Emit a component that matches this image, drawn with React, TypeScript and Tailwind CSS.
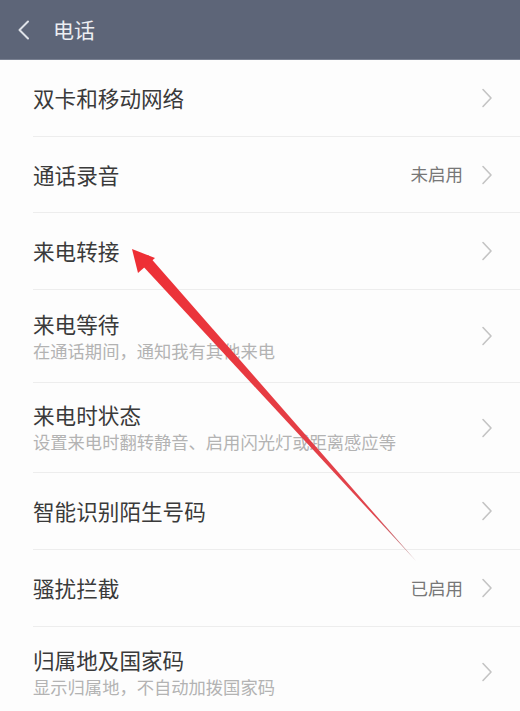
import React from "react";

type Row = { title: string; sub?: string; value?: string; h: string };

const rows: Row[] = [
  { title: "双卡和移动网络", h: "h-[77px]" },
  { title: "通话录音", value: "未启用", h: "h-[76px]" },
  { title: "来电转接", h: "h-[77px]" },
  { title: "来电等待", sub: "在通话期间，通知我有其他来电", h: "h-[93px]" },
  { title: "来电时状态", sub: "设置来电时翻转静音、启用闪光灯或距离感应等", h: "h-[90px]" },
  { title: "智能识别陌生号码", h: "h-[77px]" },
  { title: "骚扰拦截", value: "已启用", h: "h-[77px]" },
  { title: "归属地及国家码", sub: "显示归属地，不自动加拨国家码", h: "h-[90px]" },
];

function Chevron() {
  return (
    <svg width="12" height="20" viewBox="0 0 12 20" className="shrink-0">
      <path d="M2 1.5 L10 10 L2 18.5" fill="none" stroke="#c4c4c4" strokeWidth="1.6" strokeLinecap="round" strokeLinejoin="round" />
    </svg>
  );
}

export default function App() {
  return (
    <div
      className="relative w-[520px] h-[711px] overflow-hidden bg-[#fdfdfd]"
      style={{ fontFamily: '"Noto Sans CJK SC", "Noto Sans", sans-serif' }}
    >
      <div className="h-[60px] bg-[#5d6578] flex items-center border-b border-[#7a8192]">
        <div className="w-[53px] flex items-center justify-start pl-[17px]">
          <svg width="14" height="20" viewBox="0 0 14 20">
            <path d="M11 1.5 L2.5 10 L11 18.5" fill="none" stroke="#dfe2e8" strokeWidth="2" strokeLinecap="round" strokeLinejoin="round" />
          </svg>
        </div>
        <span className="text-[21px] text-[#eceef2] leading-none">电话</span>
      </div>
      <div className="flex flex-col">
        {rows.map((r, i) => (
          <div key={i} className={`${r.h} pl-[33px] flex flex-col shrink-0`}>
            <div className={`flex-1 flex items-center pr-[27px] ${i < rows.length - 1 ? "border-b border-[#ededed]" : ""}`}>
              <div className="flex-1 flex flex-col">
                <span className="text-[21.6px] leading-[28px] text-[#3a3a3a]">{r.title}</span>
                {r.sub && (
                  <span className="text-[17.3px] leading-[24px] mt-[1px] text-[#b3b3b3]">{r.sub}</span>
                )}
              </div>
              {r.value && (
                <span className="text-[17.5px] text-[#777777] mr-[18px]">{r.value}</span>
              )}
              <Chevron />
            </div>
          </div>
        ))}
      </div>
      <svg className="absolute left-0 top-0 pointer-events-none" width="520" height="711" viewBox="0 0 520 711">
        <defs>
          <linearGradient id="ar" x1="132" y1="249" x2="416" y2="561" gradientUnits="userSpaceOnUse">
            <stop offset="0" stopColor="#ee2f35" />
            <stop offset="0.85" stopColor="#e0454d" />
            <stop offset="1" stopColor="#b88a8f" />
          </linearGradient>
        </defs>
        <polygon points="416,561 140,263 148,255" fill="url(#ar)" />
        <polygon points="132,249 155,258 138,273" fill="#ee2f35" />
      </svg>
    </div>
  );
}
